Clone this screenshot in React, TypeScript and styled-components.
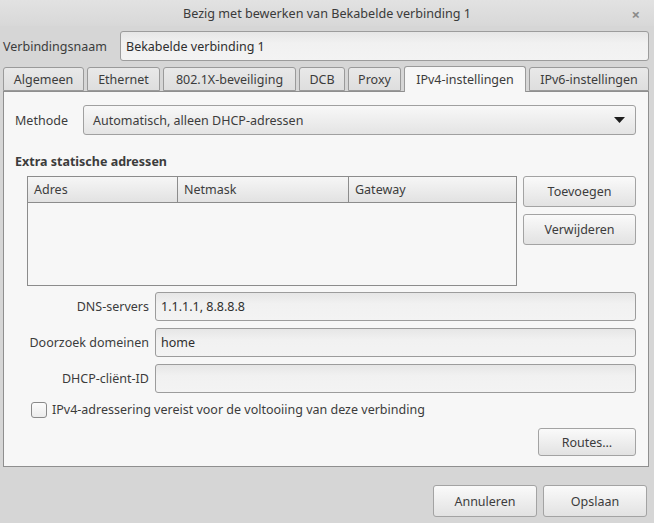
import React from "react";
import styled, { createGlobalStyle } from "styled-components";

const Global = createGlobalStyle`
  html, body { margin: 0; padding: 0; background: #d6d6d6; }
  body { font-family: "Noto Sans", "DejaVu Sans", sans-serif; font-size: 12.5px; color: #3c3c3c; }
  * { box-sizing: border-box; }
`;

const Window = styled.div`
  width: 654px;
  height: 523px;
  display: flex;
  flex-direction: column;
  background: #d6d6d6;
`;

const TitleBar = styled.div`
  height: 26px;
  display: flex;
  align-items: center;
  justify-content: center;
  position: relative;
  background: linear-gradient(#e2e2e2, #d8d8d8);
  color: #3a3a3a;
  font-size: 12.6px;
`;

const Close = styled.span`
  position: absolute;
  right: 14px;
  top: 4px;
  font-size: 15px;
  color: #8a8a8a;
  font-weight: bold;
`;

const Body = styled.div`
  flex: 1;
  display: flex;
  flex-direction: column;
  padding: 5px 5px 0 3px;
`;

const NameRow = styled.div`
  display: flex;
  align-items: center;
  height: 30px;
`;

const NameLabel = styled.label`
  width: 117px;
  flex: none;
`;

const Entry = styled.div`
  flex: 1;
  height: 30px;
  display: flex;
  align-items: center;
  padding: 0 5px;
  border: 1px solid #9c9c9c;
  border-radius: 3px;
  background: linear-gradient(#e6e6e6, #f1f1f1 40%, #f3f3f3);
  color: #2e2e2e;
`;

const TabRow = styled.div`
  display: flex;
  align-items: flex-end;
  gap: 3px;
  margin-top: 5px;
  height: 25px;
  position: relative;
  z-index: 1;
`;

const Tab = styled.div<{ $w: number; $active?: boolean }>`
  width: ${(p) => p.$w}px;
  height: ${(p) => (p.$active ? 26 : 24)}px;
  margin-bottom: ${(p) => (p.$active ? -1 : 0)}px;
  display: flex;
  align-items: center;
  justify-content: center;
  border: 1px solid #9a9a9a;
  border-bottom: ${(p) => (p.$active ? "none" : "1px solid #9a9a9a")};
  border-radius: 3px 3px 0 0;
  background: ${(p) => (p.$active ? "#f7f7f7" : "linear-gradient(#e9e9e9, #dedede)")};
  color: #3c3c3c;
  white-space: nowrap;
`;

const Panel = styled.div`
  height: 376px;
  border: 1px solid #8f8f8f;
  background: #f7f7f7;
  padding: 13px 12px 0 11px;
  display: flex;
  flex-direction: column;
`;

const MethodRow = styled.div`
  display: flex;
  align-items: center;
  height: 30px;
`;

const MethodLabel = styled.label`
  width: 68px;
  flex: none;
`;

const Combo = styled.div`
  flex: 1;
  height: 30px;
  display: flex;
  align-items: center;
  justify-content: space-between;
  padding: 0 10px 0 9px;
  border: 1px solid #a0a0a0;
  border-radius: 3px;
  background: linear-gradient(#f8f8f8, #e4e4e4);
  color: #3c3c3c;
`;

const Heading = styled.div`
  margin-top: 18px;
  font-weight: bold;
  height: 18px;
  line-height: 18px;
`;

const AddrArea = styled.div`
  display: flex;
  gap: 6px;
  margin: 5px 0 0 12px;
`;

const Table = styled.div`
  width: 490px;
  height: 110px;
  border: 1px solid #8c8c8c;
  background: #f7f7f7;
`;

const HeaderRow = styled.div`
  display: grid;
  grid-template-columns: 150px 171px 1fr;
  height: 26px;
  border-bottom: 1px solid #8c8c8c;
  background: linear-gradient(#f6f6f6, #e2e2e2);
`;

const HeaderCell = styled.div<{ $last?: boolean }>`
  display: flex;
  align-items: center;
  padding-left: 6px;
  border-right: ${(p) => (p.$last ? "none" : "1px solid #8c8c8c")};
`;

const SideButtons = styled.div`
  display: flex;
  flex-direction: column;
  gap: 7px;
`;

const Button = styled.button<{ $w: number; $h?: number }>`
  width: ${(p) => p.$w}px;
  height: ${(p) => p.$h ?? 31}px;
  font: inherit;
  color: #3c3c3c;
  border: 1px solid #a3a3a3;
  border-radius: 3px;
  background: linear-gradient(#fafafa, #e2e2e2);
  padding: 0;
  display: flex;
  align-items: center;
  justify-content: center;
`;

const FormGrid = styled.div`
  display: grid;
  grid-template-columns: 122px 1fr;
  column-gap: 6px;
  row-gap: 7px;
  margin: 6px 0 0 12px;
`;

const FormLabel = styled.label`
  text-align: right;
  align-self: center;
  white-space: nowrap;
`;

const FormEntry = styled(Entry)`
  height: 29px;
`;

const CheckRow = styled.div`
  display: flex;
  align-items: center;
  gap: 5px;
  margin: 8px 0 0 16px;
  height: 17px;
`;

const Check = styled.span`
  width: 16px;
  height: 16px;
  border: 1px solid #8a8a8a;
  border-radius: 3px;
  background: linear-gradient(#fcfcfc, #ececec);
  flex: none;
`;

const RoutesRow = styled.div`
  display: flex;
  justify-content: flex-end;
  margin-top: 10px;
`;

const Footer = styled.div`
  display: flex;
  justify-content: flex-end;
  gap: 6px;
  margin-top: 18px;
  padding-right: 2px;
`;

const tabs: [string, number][] = [
  ["Algemeen", 81],
  ["Ethernet", 73],
  ["802.1X-beveiliging", 133],
  ["DCB", 46],
  ["Proxy", 53],
  ["IPv4-instellingen", 122],
  ["IPv6-instellingen", 120],
];

export default function App() {
  return (
    <Window>
      <Global />
      <TitleBar>
        Bezig met bewerken van Bekabelde verbinding 1
        <Close>×</Close>
      </TitleBar>
      <Body>
        <NameRow>
          <NameLabel>Verbindingsnaam</NameLabel>
          <Entry>Bekabelde verbinding 1</Entry>
        </NameRow>
        <TabRow>
          {tabs.map(([t, w]) => (
            <Tab key={t} $w={w} $active={t === "IPv4-instellingen"}>
              {t}
            </Tab>
          ))}
        </TabRow>
        <Panel>
          <MethodRow>
            <MethodLabel>Methode</MethodLabel>
            <Combo>
              <span>Automatisch, alleen DHCP-adressen</span>
              <svg width="11" height="6" viewBox="0 0 11 6">
                <path d="M0 0 H11 L5.5 6 Z" fill="#1e1e1e" />
              </svg>
            </Combo>
          </MethodRow>
          <Heading>Extra statische adressen</Heading>
          <AddrArea>
            <Table>
              <HeaderRow>
                <HeaderCell>Adres</HeaderCell>
                <HeaderCell>Netmask</HeaderCell>
                <HeaderCell $last>Gateway</HeaderCell>
              </HeaderRow>
            </Table>
            <SideButtons>
              <Button $w={113}>Toevoegen</Button>
              <Button $w={113}>Verwijderen</Button>
            </SideButtons>
          </AddrArea>
          <FormGrid>
            <FormLabel>DNS-servers</FormLabel>
            <FormEntry>1.1.1.1, 8.8.8.8</FormEntry>
            <FormLabel>Doorzoek domeinen</FormLabel>
            <FormEntry>home</FormEntry>
            <FormLabel>DHCP-cliënt-ID</FormLabel>
            <FormEntry />
          </FormGrid>
          <CheckRow>
            <Check />
            <span>IPv4-adressering vereist voor de voltooiing van deze verbinding</span>
          </CheckRow>
          <RoutesRow>
            <Button $w={98} $h={28}>Routes…</Button>
          </RoutesRow>
        </Panel>
        <Footer>
          <Button $w={104} $h={32}>Annuleren</Button>
          <Button $w={104} $h={32}>Opslaan</Button>
        </Footer>
      </Body>
    </Window>
  );
}
